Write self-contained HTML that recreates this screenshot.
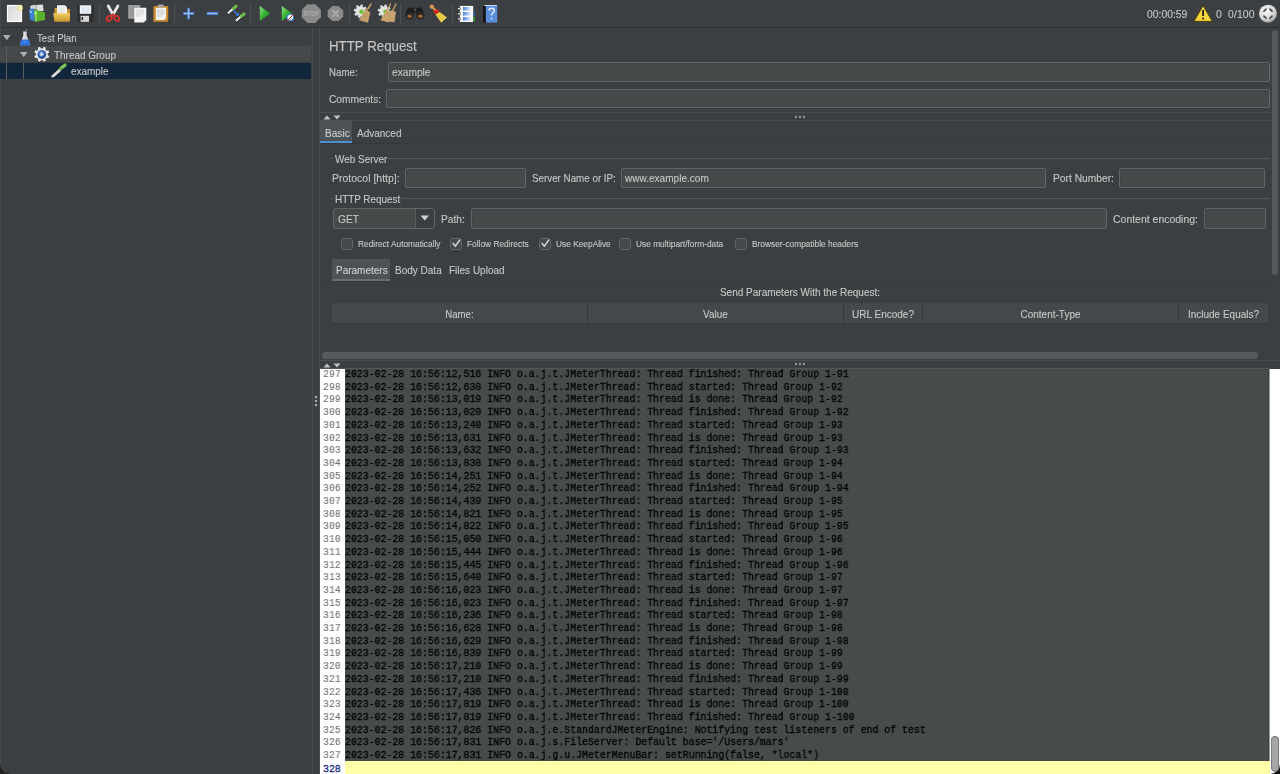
<!DOCTYPE html>
<html><head><meta charset="utf-8">
<style>
*{margin:0;padding:0;box-sizing:border-box}
html,body{width:1280px;height:774px;overflow:hidden;background:#3c3f41;font-family:"Liberation Sans",sans-serif;color:#c8c8c8}
.t{will-change:transform;-webkit-text-stroke:0.1px currentColor}
.a{position:absolute}
.t{position:absolute;white-space:nowrap}
.log{position:absolute;left:344px;top:369px;width:926px;height:405px;background:#474b4c;overflow:hidden}
.log pre, .gut pre{position:absolute;font-family:"Liberation Mono",monospace;font-size:11.5px;line-height:12.71px;transform-origin:0 0;transform:scale(0.8587,1);will-change:transform;-webkit-text-stroke:0.3px currentColor}
.log pre{left:1px;top:-1.0px;color:#000}
.gut{position:absolute;left:320px;top:369px;width:25px;height:405px;background:#fff;overflow:hidden}
.gut pre{left:2.5px;top:-1.0px;color:#727272;-webkit-text-stroke:0.12px currentColor}
</style></head><body>
<div class="a" style="left:0px;top:27px;width:1280px;height:1px;background:#2f3133;"></div>
<div class="a" style="left:99px;top:4px;width:1px;height:20px;background:#4f5254;"></div>
<div class="a" style="left:174px;top:4px;width:1px;height:20px;background:#4f5254;"></div>
<div class="a" style="left:250px;top:4px;width:1px;height:20px;background:#4f5254;"></div>
<div class="a" style="left:349px;top:4px;width:1px;height:20px;background:#4f5254;"></div>
<div class="a" style="left:400px;top:4px;width:1px;height:20px;background:#4f5254;"></div>
<div class="a" style="left:452px;top:4px;width:1px;height:20px;background:#4f5254;"></div>
<div class="t" style="left:1147px;top:9.83px;font-size:10.36px;line-height:10.36px;transform-origin:0 8.77px;transform:scaleY(1.1);">00:00:59</div>
<div class="t" style="left:1215.6px;top:9.80px;font-size:10.4px;line-height:10.4px;transform-origin:0 8.80px;transform:scaleY(1.1);">0</div>
<div class="t" style="left:1227.5px;top:9.80px;font-size:10.4px;line-height:10.4px;transform-origin:0 8.80px;transform:scaleY(1.1);letter-spacing:0.12px;">0/100</div>
<div class="a" style="left:0px;top:0px;width:1px;height:774px;background:#46494b;"></div>
<div class="a" style="left:0px;top:46px;width:311px;height:16px;background:#46494b;"></div>
<div class="a" style="left:0px;top:63px;width:311px;height:16px;background:#12263b;"></div>
<div class="a" style="left:6px;top:46px;width:1px;height:33px;background:#5a5d5f;"></div>
<div class="a" style="left:23px;top:63px;width:1px;height:16px;background:#5a5d5f;"></div>
<div class="t" style="left:36.5px;top:34.07px;font-size:9.6px;line-height:9.6px;transform-origin:0 8.13px;transform:scaleY(1.1);">Test Plan</div>
<div class="t" style="left:53.5px;top:50.67px;font-size:9.96px;line-height:9.96px;transform-origin:0 8.43px;transform:scaleY(1.1);">Thread Group</div>
<div class="t" style="left:70.5px;top:67.10px;font-size:9.92px;line-height:9.92px;transform-origin:0 8.40px;transform:scaleY(1.1);">example</div>
<svg class="a" style="left:3px;top:35px" width="8" height="6" viewBox="0 0 8 6"><path d="M0 0H7.5L3.75 5.2Z" fill="#aeaeae"/></svg>
<svg class="a" style="left:20px;top:52px" width="8" height="6" viewBox="0 0 8 6"><path d="M0 0H7.5L3.75 5.2Z" fill="#aeaeae"/></svg>
<div class="a" style="left:312px;top:28px;width:1px;height:746px;background:#4a4d4f;"></div>
<div class="a" style="left:319px;top:28px;width:1px;height:746px;background:#4a4d4f;"></div>
<svg class="a" style="left:314px;top:395.0px" width="4" height="4" viewBox="0 0 4 4"><circle cx="2" cy="2" r="1.3" fill="#d8d8d8" stroke="#2a2a2a" stroke-width=".4"/></svg>
<svg class="a" style="left:314px;top:399.2px" width="4" height="4" viewBox="0 0 4 4"><circle cx="2" cy="2" r="1.3" fill="#d8d8d8" stroke="#2a2a2a" stroke-width=".4"/></svg>
<svg class="a" style="left:314px;top:403.4px" width="4" height="4" viewBox="0 0 4 4"><circle cx="2" cy="2" r="1.3" fill="#d8d8d8" stroke="#2a2a2a" stroke-width=".4"/></svg>
<div class="t" style="left:328.5px;top:40.14px;font-size:13.3px;line-height:13.3px;transform-origin:0 11.26px;transform:scaleY(1.1);">HTTP Request</div>
<div class="t" style="left:328.5px;top:67.95px;font-size:9.75px;line-height:9.75px;transform-origin:0 8.25px;transform:scaleY(1.1);">Name:</div>
<div class="a" style="left:388px;top:62px;width:882px;height:20px;background:#45494a;border:1px solid #626567;border-radius:2px;box-shadow:inset 1px 1px 0 #3f4345;"></div>
<div class="t" style="left:392px;top:67.57px;font-size:10.2px;line-height:10.2px;transform-origin:0 8.63px;transform:scaleY(1.1);">example</div>
<div class="t" style="left:328.5px;top:94.67px;font-size:10.2px;line-height:10.2px;transform-origin:0 8.63px;transform:scaleY(1.1);">Comments:</div>
<div class="a" style="left:386px;top:89px;width:884px;height:19px;background:#45494a;border:1px solid #626567;border-radius:2px;box-shadow:inset 1px 1px 0 #3f4345;"></div>
<div class="a" style="left:320px;top:112px;width:950px;height:1px;background:#4b4e50;"></div>
<div class="a" style="left:320px;top:120px;width:950px;height:1px;background:#4b4e50;"></div>
<svg class="a" style="left:323px;top:115px" width="8" height="5" viewBox="0 0 8 5"><path d="M0.5 4.5H7.5L4 0.5Z" fill="#c0c0c0"/></svg>
<svg class="a" style="left:333px;top:115px" width="8" height="5" viewBox="0 0 8 5"><path d="M0.5 0.5H7.5L4 4.5Z" fill="#c0c0c0"/></svg>
<svg class="a" style="left:794.0px;top:115px" width="4" height="4" viewBox="0 0 4 4"><circle cx="2" cy="2" r="1.2" fill="#dcdcdc" stroke="#222" stroke-width=".5"/></svg>
<svg class="a" style="left:797.9px;top:115px" width="4" height="4" viewBox="0 0 4 4"><circle cx="2" cy="2" r="1.2" fill="#dcdcdc" stroke="#222" stroke-width=".5"/></svg>
<svg class="a" style="left:801.8px;top:115px" width="4" height="4" viewBox="0 0 4 4"><circle cx="2" cy="2" r="1.2" fill="#dcdcdc" stroke="#222" stroke-width=".5"/></svg>
<div class="a" style="left:320px;top:121px;width:32px;height:20px;background:#4d5254;"></div>
<div class="a" style="left:320px;top:141px;width:32px;height:2.6999999999999886px;background:#4f8ed6;"></div>
<div class="a" style="left:320px;top:143px;width:950px;height:1px;background:#37393b;"></div>
<div class="t" style="left:324.5px;top:128.55px;font-size:10.1px;line-height:10.1px;transform-origin:0 8.55px;transform:scaleY(1.1);color:#d0d0d0;">Basic</div>
<div class="t" style="left:356.5px;top:128.63px;font-size:10.0px;line-height:10.0px;transform-origin:0 8.46px;transform:scaleY(1.1);">Advanced</div>
<div class="a" style="left:330px;top:158px;width:3px;height:1px;background:#55585a;"></div>
<div class="a" style="left:387px;top:158px;width:883px;height:1px;background:#55585a;"></div>
<div class="t" style="left:334.5px;top:154.58px;font-size:9.95px;line-height:9.95px;transform-origin:0 8.42px;transform:scaleY(1.1);">Web Server</div>
<div class="t" style="left:332px;top:173.21px;font-size:10.5px;line-height:10.5px;transform-origin:0 8.89px;transform:scaleY(1.1);">Protocol [http]:</div>
<div class="a" style="left:405px;top:168px;width:121px;height:20px;background:#45494a;border:1px solid #626567;border-radius:2px;box-shadow:inset 1px 1px 0 #3f4345;"></div>
<div class="t" style="left:531.75px;top:174.30px;font-size:9.8px;line-height:9.8px;transform-origin:0 8.30px;transform:scaleY(1.1);">Server Name or IP:</div>
<div class="a" style="left:621px;top:168px;width:425px;height:20px;background:#45494a;border:1px solid #626567;border-radius:2px;box-shadow:inset 1px 1px 0 #3f4345;"></div>
<div class="t" style="left:625px;top:174.09px;font-size:10.05px;line-height:10.05px;transform-origin:0 8.51px;transform:scaleY(1.1);">www.example.com</div>
<div class="t" style="left:1052.5px;top:173.91px;font-size:10.26px;line-height:10.26px;transform-origin:0 8.69px;transform:scaleY(1.1);">Port Number:</div>
<div class="a" style="left:1119px;top:168px;width:146px;height:20px;background:#45494a;border:1px solid #626567;border-radius:2px;box-shadow:inset 1px 1px 0 #3f4345;"></div>
<div class="a" style="left:330px;top:198px;width:3px;height:1px;background:#55585a;"></div>
<div class="a" style="left:402px;top:198px;width:868px;height:1px;background:#55585a;"></div>
<div class="t" style="left:334.5px;top:195.22px;font-size:9.9px;line-height:9.9px;transform-origin:0 8.38px;transform:scaleY(1.1);">HTTP Request</div>
<div class="a" style="left:333px;top:208px;width:102px;height:21px;background:#45494a;border:1px solid #646464;border-radius:3px;"></div>
<div class="a" style="left:415px;top:209px;width:19px;height:19px;background:#3c3f41;border-left:1px solid #5a5d5f;border-radius:0 2px 2px 0;"></div>
<svg class="a" style="left:420px;top:215px" width="10" height="6" viewBox="0 0 10 6"><path d="M0.5 0.5H9L4.75 5.5Z" fill="#d0d0d0"/></svg>
<div class="t" style="left:338px;top:214.97px;font-size:10.2px;line-height:10.2px;transform-origin:0 8.63px;transform:scaleY(1.1);">GET</div>
<div class="t" style="left:441px;top:214.97px;font-size:10.2px;line-height:10.2px;transform-origin:0 8.63px;transform:scaleY(1.1);">Path:</div>
<div class="a" style="left:471px;top:208px;width:636px;height:21px;background:#45494a;border:1px solid #626567;border-radius:2px;box-shadow:inset 1px 1px 0 #3f4345;"></div>
<div class="t" style="left:1113px;top:214.74px;font-size:10.47px;line-height:10.47px;transform-origin:0 8.86px;transform:scaleY(1.1);">Content encoding:</div>
<div class="a" style="left:1204px;top:208px;width:62px;height:21px;background:#45494a;border:1px solid #626567;border-radius:2px;box-shadow:inset 1px 1px 0 #3f4345;"></div>
<div class="a" style="left:341px;top:237.5px;width:12px;height:12.5px;background:#44484a;border:1.2px solid #636668;border-radius:2.5px;"></div>
<div class="t" style="left:358px;top:240.13px;font-size:8.35px;line-height:8.35px;transform-origin:0 7.07px;transform:scaleY(1.1);">Redirect Automatically</div>
<div class="a" style="left:450px;top:237.5px;width:12px;height:12.5px;background:#44484a;border:1.2px solid #636668;border-radius:2.5px;"></div>
<svg class="a" style="left:451px;top:238px" width="11" height="11" viewBox="0 0 11 11"><path d="M2.2 5.4L4.3 8.2L8.6 2.2" fill="none" stroke="#cfcfcf" stroke-width="1.6" stroke-linecap="round"/></svg>
<div class="t" style="left:467px;top:240.13px;font-size:8.35px;line-height:8.35px;transform-origin:0 7.07px;transform:scaleY(1.1);">Follow Redirects</div>
<div class="a" style="left:539px;top:237.5px;width:12px;height:12.5px;background:#44484a;border:1.2px solid #636668;border-radius:2.5px;"></div>
<svg class="a" style="left:540px;top:238px" width="11" height="11" viewBox="0 0 11 11"><path d="M2.2 5.4L4.3 8.2L8.6 2.2" fill="none" stroke="#cfcfcf" stroke-width="1.6" stroke-linecap="round"/></svg>
<div class="t" style="left:556px;top:240.13px;font-size:8.35px;line-height:8.35px;transform-origin:0 7.07px;transform:scaleY(1.1);">Use KeepAlive</div>
<div class="a" style="left:619px;top:237.5px;width:12px;height:12.5px;background:#44484a;border:1.2px solid #636668;border-radius:2.5px;"></div>
<div class="t" style="left:636px;top:240.13px;font-size:8.35px;line-height:8.35px;transform-origin:0 7.07px;transform:scaleY(1.1);">Use multipart/form-data</div>
<div class="a" style="left:735px;top:237.5px;width:12px;height:12.5px;background:#44484a;border:1.2px solid #636668;border-radius:2.5px;"></div>
<div class="t" style="left:751.5px;top:240.13px;font-size:8.35px;line-height:8.35px;transform-origin:0 7.07px;transform:scaleY(1.1);">Browser-compatible headers</div>
<div class="a" style="left:332px;top:259px;width:58px;height:20px;background:#4d5254;"></div>
<div class="a" style="left:332px;top:279px;width:58px;height:3px;background:#6a6d6f;"></div>
<div class="a" style="left:320px;top:281px;width:950px;height:1px;background:#37393b;"></div>
<div class="t" style="left:336px;top:266.14px;font-size:10.0px;line-height:10.0px;transform-origin:0 8.46px;transform:scaleY(1.1);color:#d0d0d0;">Parameters</div>
<div class="t" style="left:394.5px;top:266.14px;font-size:10.0px;line-height:10.0px;transform-origin:0 8.46px;transform:scaleY(1.1);">Body Data</div>
<div class="t" style="left:449px;top:266.14px;font-size:10.0px;line-height:10.0px;transform-origin:0 8.46px;transform:scaleY(1.1);">Files Upload</div>
<div class="t" style="left:600px;top:288.14px;font-size:10.0px;line-height:10.0px;transform-origin:0 8.46px;transform:scaleY(1.1);width:400px;text-align:center;">Send Parameters With the Request:</div>
<div class="a" style="left:332px;top:303px;width:936px;height:21px;background:#45484a;"></div>
<div class="a" style="left:332px;top:323px;width:936px;height:1px;background:#37393b;"></div>
<div class="a" style="left:587px;top:303px;width:1px;height:20px;background:#38393b;"></div>
<div class="a" style="left:843px;top:303px;width:1px;height:20px;background:#38393b;"></div>
<div class="a" style="left:922px;top:303px;width:1px;height:20px;background:#38393b;"></div>
<div class="a" style="left:1178px;top:303px;width:1px;height:20px;background:#38393b;"></div>
<div class="t" style="left:332px;top:310.47px;font-size:9.6px;line-height:9.6px;transform-origin:0 8.13px;transform:scaleY(1.1);width:255px;text-align:center;">Name:</div>
<div class="t" style="left:588px;top:310.14px;font-size:10.0px;line-height:10.0px;transform-origin:0 8.46px;transform:scaleY(1.1);width:255px;text-align:center;">Value</div>
<div class="t" style="left:844px;top:310.14px;font-size:10.0px;line-height:10.0px;transform-origin:0 8.46px;transform:scaleY(1.1);width:78px;text-align:center;">URL Encode?</div>
<div class="t" style="left:923px;top:310.14px;font-size:10.0px;line-height:10.0px;transform-origin:0 8.46px;transform:scaleY(1.1);width:255px;text-align:center;">Content-Type</div>
<div class="t" style="left:1179px;top:310.14px;font-size:10.0px;line-height:10.0px;transform-origin:0 8.46px;transform:scaleY(1.1);width:89px;text-align:center;">Include Equals?</div>
<div class="a" style="left:1272px;top:30px;width:6px;height:245px;background:#56595b;border-radius:3px;"></div>
<div class="a" style="left:322px;top:352px;width:936px;height:6.5px;background:#56595b;border-radius:3px;"></div>
<div class="a" style="left:320px;top:360px;width:960px;height:1px;background:#4b4e50;"></div>
<div class="a" style="left:320px;top:361px;width:960px;height:7px;background:#3c3f41;"></div>
<svg class="a" style="left:323px;top:363px" width="8" height="5" viewBox="0 0 8 5"><path d="M0.5 4.5H7.5L4 0.5Z" fill="#c0c0c0"/></svg>
<svg class="a" style="left:333px;top:363px" width="8" height="5" viewBox="0 0 8 5"><path d="M0.5 0.5H7.5L4 4.5Z" fill="#c0c0c0"/></svg>
<svg class="a" style="left:794.0px;top:362px" width="4" height="4" viewBox="0 0 4 4"><circle cx="2" cy="2" r="1.2" fill="#dcdcdc" stroke="#222" stroke-width=".5"/></svg>
<svg class="a" style="left:797.9px;top:362px" width="4" height="4" viewBox="0 0 4 4"><circle cx="2" cy="2" r="1.2" fill="#dcdcdc" stroke="#222" stroke-width=".5"/></svg>
<svg class="a" style="left:801.8px;top:362px" width="4" height="4" viewBox="0 0 4 4"><circle cx="2" cy="2" r="1.2" fill="#dcdcdc" stroke="#222" stroke-width=".5"/></svg>
<div class="a" style="left:320px;top:368px;width:950px;height:1px;background:#525557;"></div>
<div class="a" style="left:1270px;top:369px;width:10px;height:405px;background:#ffffff;"></div>
<div class="a" style="left:1271px;top:736px;width:8px;height:36px;background:#a6a6a6;border:1px solid #7a7a7a;border-radius:4px;"></div>
<div class="a" style="left:0;top:764px;width:10px;height:10px;background:#222"><div class="a" style="left:0;top:0;width:10px;height:10px;background:#3c3f41;border-bottom-left-radius:10px"></div></div>
<div class="a" style="left:1270px;top:764px;width:10px;height:10px;background:#111"><div class="a" style="left:0;top:0;width:10px;height:10px;background:#fff;border-bottom-right-radius:10px"></div></div>
<div class="a" style="left:1271px;top:736px;width:8px;height:36px;background:#a6a6a6;border:1px solid #7a7a7a;border-radius:4px;"></div>
<svg class="a" width="0" height="0" style="left:0;top:0"><defs>
<linearGradient id="gG" x1="0" y1="0" x2="1" y2="1"><stop offset="0" stop-color="#8ee88a"/><stop offset=".5" stop-color="#34b030"/><stop offset="1" stop-color="#1a7a1a"/></linearGradient>
<linearGradient id="gFold" x1="0" y1="0" x2="0" y2="1"><stop offset="0" stop-color="#f2cc60"/><stop offset="1" stop-color="#c8962c"/></linearGradient>
<linearGradient id="gPage" x1="0" y1="0" x2="1" y2="1"><stop offset="0" stop-color="#d8d8d8"/><stop offset="1" stop-color="#f0f0f0"/></linearGradient>
<linearGradient id="gBlue" x1="0" y1="0" x2="1" y2="0"><stop offset="0" stop-color="#4a84e0"/><stop offset="1" stop-color="#f4f8ff"/></linearGradient>
<radialGradient id="gSph" cx=".45" cy=".4" r=".6"><stop offset="0" stop-color="#9ab8f0"/><stop offset=".6" stop-color="#3060b8"/><stop offset="1" stop-color="#1a3a80"/></radialGradient>
<radialGradient id="rg" cx=".4" cy=".35" r=".7"><stop offset="0" stop-color="#ffffff"/><stop offset=".7" stop-color="#d0d0d0"/><stop offset="1" stop-color="#8a8a8a"/></radialGradient>
</defs></svg>
<svg class="a" style="left:5px;top:3px;overflow:visible" width="20" height="22" viewBox="5 3 20 22">
<rect x="7.5" y="5.5" width="14" height="16" fill="url(#gPage)" stroke="#ffffff" stroke-width="1.2"/>
<path d="M8.3 9.5h1M8.3 13.5h1M8.3 17.5h1" stroke="#b0b0b0" stroke-width=".6"/>
<circle cx="20.3" cy="7.9" r="2.1" fill="#fffbe0" stroke="#ecd850" stroke-width="1.1" stroke-opacity=".8"/>
</svg>
<svg class="a" style="left:27px;top:3px;overflow:visible" width="20" height="21" viewBox="27 3 20 21">
<path d="M30 6 L35 4.5 L37 9 L31 10Z" fill="#d4d4d4"/>
<path d="M36 5 L43 4.5 L43.5 11 L37 11Z" fill="#dedede"/>
<path d="M29 9.2 L34.2 8.6 L34.6 21 L30.2 20.2Z" fill="#3b80d6"/>
<path d="M30 11 L31.5 10.8 L31.8 13 L30.3 13Z" fill="#cfe4ff" fill-opacity=".8"/>
<path d="M34 10.5 L37 10.3 L45 12.5 L45 20 L35 21.8Z" fill="#58b02e"/>
<path d="M34 10.5 L37 10.3 L37 21.2 L35 21.8Z" fill="#7fd04e"/>
<rect x="35" y="12.5" width="1.5" height="1.6" fill="#e6ffd0"/>
</svg>
<svg class="a" style="left:52px;top:4px;overflow:visible" width="20" height="20" viewBox="52 4 20 20">
<path d="M54.5 8 H58 L59 9 H70 V21 H54.5Z" fill="#c8962c"/>
<path d="M57 5.2 H65 L67 7.2 V14 H57Z" fill="#f6f6f6"/>
<path d="M58.5 8h6M58.5 10h6M58.5 12h6" stroke="#c8c8c8" stroke-width=".6"/>
<path d="M53.2 13.3 H70 L69.6 21.8 H54.5Z" fill="url(#gFold)"/>
</svg>
<svg class="a" style="left:76px;top:4px;overflow:visible" width="19" height="19" viewBox="76 4 19 19">
<path d="M77.3 5 H93.8 V21.8 H78.5 L77.3 20.6Z" fill="#2e2e2e"/>
<rect x="79.8" y="5.3" width="11.4" height="8.5" fill="#f4f7fb"/>
<path d="M81 8h9M81 10h9M81 12h9" stroke="#b4c4dc" stroke-width=".6"/>
<rect x="80.6" y="15.8" width="8.4" height="6" fill="#d8d8d8"/>
<rect x="81.6" y="17" width="1.5" height="3" fill="#222"/>
</svg>
<svg class="a" style="left:104px;top:3px;overflow:visible" width="18" height="21" viewBox="104 3 18 21">
<path d="M108.3 6 L112.6 13.9 M117.9 6 L113.4 13.9" stroke="#e6e6e6" stroke-width="2.8" stroke-linecap="round"/>
<ellipse cx="109.2" cy="18.4" rx="2.9" ry="2.1" transform="rotate(-50 109.2 18.4)" fill="none" stroke="#dc3228" stroke-width="1.8"/>
<ellipse cx="116.8" cy="18.4" rx="2.9" ry="2.1" transform="rotate(50 116.8 18.4)" fill="none" stroke="#dc3228" stroke-width="1.8"/>
<path d="M111.3 15.6 L113 14 L114.7 15.6" stroke="#dc3228" stroke-width="1.6" fill="none"/>
</svg>
<svg class="a" style="left:127px;top:4px;overflow:visible" width="21" height="20" viewBox="127 4 21 20">
<rect x="128.2" y="5" width="12" height="13.7" fill="#a0a0a0"/>
<path d="M129.5 7h9M129.5 9h9M129.5 11h9M129.5 13h9M129.5 15h9" stroke="#8c8c8c" stroke-width=".6"/>
<path d="M134.3 7.7 H146.3 V20 L143.8 22.5 H134.3Z" fill="#f6f6f6"/>
<path d="M136 10h8M136 12h8M136 14h8M136 16h6" stroke="#bdbdbd" stroke-width=".7"/>
<path d="M143.8 22.5 V20 H146.3Z" fill="#c8c8c8"/>
</svg>
<svg class="a" style="left:152px;top:3px;overflow:visible" width="18" height="20" viewBox="152 3 18 20">
<rect x="153.4" y="6.1" width="14.8" height="15.6" rx="1" fill="#c88b2e"/>
<path d="M155.8 7.7 H166 V18 L164 20 H155.8Z" fill="#f4f4f4"/>
<path d="M157 10h7.5M157 12h7.5M157 14h7.5M157 16h5" stroke="#b4b4b4" stroke-width=".7"/>
<rect x="157.8" y="4.5" width="6" height="3" rx="1.2" fill="#a8a8a0"/>
</svg>
<svg class="a" style="left:181px;top:6px;overflow:visible" width="15" height="15" viewBox="181 6 15 15">
<path d="M188.6 7.8 V19.2 M183.2 13.5 H194.2" stroke="#4a80d0" stroke-width="2.8"/>
<path d="M188.6 8.6 V18.4 M184 13.5 H193.4" stroke="#c4dcf8" stroke-width=".7"/>
</svg>
<svg class="a" style="left:205px;top:10px;overflow:visible" width="15" height="7" viewBox="205 10 15 7">
<path d="M206.8 13.45 H218.2" stroke="#4a80d0" stroke-width="3.2"/>
<path d="M207.6 13.45 H217.4" stroke="#c4dcf8" stroke-width=".7"/>
</svg>
<svg class="a" style="left:225px;top:3px;overflow:visible" width="23" height="21" viewBox="225 3 23 21">
<path d="M228.5 12.8 L233.2 8.6" stroke="#1c1c1c" stroke-width="3.4" stroke-linecap="round"/>
<path d="M228.5 12.8 L233.2 8.6" stroke="#ececec" stroke-width="2.2" stroke-linecap="round"/>
<path d="M233.6 8.4 L236 6.3" stroke="#6cb84a" stroke-width="3.2" stroke-linecap="round"/>
<path d="M236.4 20.4 L241.1 16.4" stroke="#1c1c1c" stroke-width="3.4" stroke-linecap="round"/>
<path d="M236.4 20.4 L241.1 16.4" stroke="#ececec" stroke-width="2.2" stroke-linecap="round"/>
<path d="M241.5 16.1 L244 14" stroke="#6cb84a" stroke-width="3.2" stroke-linecap="round"/>
<path d="M233.5 10.8 L237.6 14.6" stroke="#3a84f0" stroke-width="1.3"/>
<path d="M235.6 15.6 L239.2 15.8 L238.6 12.4Z" fill="#3a84f0"/>
</svg>
<svg class="a" style="left:258px;top:5px;overflow:visible" width="14" height="17" viewBox="258 5 14 17">
<path d="M259.8 6 L270.2 13.5 L259.8 21Z" fill="url(#gG)"/>
</svg>
<svg class="a" style="left:280px;top:5px;overflow:visible" width="16" height="18" viewBox="280 5 16 18">
<path d="M281.8 6 L292.2 13.5 L281.8 21Z" fill="url(#gG)"/>
<circle cx="290.3" cy="17.5" r="3.3" fill="#f0f4ff" stroke="#3a78d0" stroke-width="1.1"/>
<path d="M286.5 21.5 L294 14" stroke="#d83020" stroke-width="1"/>
</svg>
<svg class="a" style="left:301px;top:3px;overflow:visible" width="21" height="21" viewBox="301 3 21 21">
<path d="M307.4 4.2 H315.3 L320.9 9.8 V17.3 L315.3 22.9 H307.4 L301.8 17.3 V9.8Z" fill="#8a8a8a"/>
<text x="311.35" y="16.2" font-family="Liberation Sans" font-weight="bold" font-size="7.2" fill="#a6a6a6" stroke="#a6a6a6" stroke-width=".35" text-anchor="middle" textLength="15" lengthAdjust="spacingAndGlyphs">STOP</text>
</svg>
<svg class="a" style="left:327px;top:5px;overflow:visible" width="17" height="17" viewBox="327 5 17 17">
<path d="M332.2 6 H338.7 L343.2 10.5 V16.5 L338.7 21 H332.2 L327.7 16.5 V10.5Z" fill="#8a8a8a"/>
<path d="M332.3 10.3 L338.6 16.7 M338.6 10.3 L332.3 16.7" stroke="#a8a8a8" stroke-width="2.2"/>
</svg>
<svg class="a" style="left:352px;top:3px;overflow:visible" width="23" height="21" viewBox="352 3 23 21">
<path d="M365.49 10.96 L367.30 11.39 L366.83 13.68 L365.01 13.37 L364.20 14.56 L365.18 16.14 L363.23 17.43 L362.15 15.92 L360.74 16.19 L360.31 18.00 L358.02 17.53 L358.33 15.71 L357.14 14.90 L355.56 15.88 L354.27 13.93 L355.78 12.85 L355.51 11.44 L353.70 11.01 L354.17 8.72 L355.99 9.03 L356.80 7.84 L355.82 6.26 L357.77 4.97 L358.85 6.48 L360.26 6.21 L360.69 4.40 L362.98 4.87 L362.67 6.69 L363.86 7.50 L365.44 6.52 L366.73 8.47 L365.22 9.55Z" fill="#e2e2e2"/>
<circle cx="361.5" cy="11.8" r="2.3" fill="#6cc83a"/>
<path d="M371 4 L366.5 11" stroke="#c09a62" stroke-width="1.6" stroke-linecap="round"/>
<path d="M365 10 L370.2 12 L368 22.7 L359 20.2Z" fill="#c8a26c"/>
<path d="M366 13 L362 20 M368 13 L365 21" stroke="#a88450" stroke-width=".5"/>
</svg>
<svg class="a" style="left:376px;top:3px;overflow:visible" width="22" height="21" viewBox="376 3 22 21">
<path d="M389.49 10.96 L391.30 11.39 L390.83 13.68 L389.01 13.37 L388.20 14.56 L389.18 16.14 L387.23 17.43 L386.15 15.92 L384.74 16.19 L384.31 18.00 L382.02 17.53 L382.33 15.71 L381.14 14.90 L379.56 15.88 L378.27 13.93 L379.78 12.85 L379.51 11.44 L377.70 11.01 L378.17 8.72 L379.99 9.03 L380.80 7.84 L379.82 6.26 L381.77 4.97 L382.85 6.48 L384.26 6.21 L384.69 4.40 L386.98 4.87 L386.67 6.69 L387.86 7.50 L389.44 6.52 L390.73 8.47 L389.22 9.55Z" fill="#e2e2e2"/>
<circle cx="385.5" cy="11.8" r="2.3" fill="#6cc83a"/>
<path d="M390.5 4 L387 11 M396 4 L392.5 11" stroke="#c09a62" stroke-width="1.5" stroke-linecap="round"/>
<path d="M386 10 L391 12 L389 22.5 L380.5 20.2Z" fill="#c8a26c"/>
<path d="M391.5 10 L396 12 L394.5 22.5 L387 21Z" fill="#c8a26c"/>
</svg>
<svg class="a" style="left:403px;top:5px;overflow:visible" width="23" height="16" viewBox="403 5 23 16">
<path d="M407.5 9 L410 7.2 L413.5 8 L414.5 10 L415.5 10 L416.5 8 L420 7.2 L422.5 9 L424.2 15 L419 17 L415.2 12.5 L414.8 12.5 L411 17 L405 15Z" fill="#1e1e1e"/>
<circle cx="409.6" cy="15.6" r="4" fill="#262626"/>
<circle cx="420.4" cy="15.6" r="4" fill="#262626"/>
<ellipse cx="409.6" cy="16.3" rx="2.3" ry="1.7" fill="#a86428"/>
<ellipse cx="420.4" cy="16.3" rx="2.3" ry="1.7" fill="#a86428"/>
<circle cx="415" cy="10.3" r="1" fill="#5a5a5a"/>
</svg>
<svg class="a" style="left:428px;top:3px;overflow:visible" width="21" height="21" viewBox="428 3 21 21">
<circle cx="431.8" cy="6.6" r="2.2" fill="#d09850"/>
<path d="M432 6.8 L436 11" stroke="#d09850" stroke-width="2.2"/>
<path d="M433 11.3 L437.5 9 L439.8 12 L435.5 14.5Z" fill="#d62a1c"/>
<path d="M435.5 14.5 L439.8 12 L447 17.4 L441.2 22.8Z" fill="#e8d048"/>
<path d="M438 15 L443 20 M440 13.5 L445 18.5" stroke="#c8b038" stroke-width=".6"/>
</svg>
<svg class="a" style="left:456px;top:4px;overflow:visible" width="21" height="19" viewBox="456 4 21 19">
<rect x="459.8" y="5.9" width="13.4" height="16.1" fill="#fafafa"/>
<rect x="463" y="7" width="8.5" height="3.5" fill="url(#gBlue)"/>
<rect x="463" y="12" width="8.5" height="3.5" fill="url(#gBlue)"/>
<rect x="463" y="17" width="8.5" height="3.5" fill="url(#gBlue)"/>
<circle cx="459" cy="8.7" r="1.4" fill="#fff" stroke="#111" stroke-width=".7"/>
<circle cx="459" cy="13.8" r="1.4" fill="#fff" stroke="#111" stroke-width=".7"/>
<circle cx="459" cy="18.9" r="1.4" fill="#fff" stroke="#111" stroke-width=".7"/>
<rect x="473.2" y="12" width="1.8" height="3.5" fill="#2a62d0"/>
<rect x="473.2" y="17" width="1.8" height="4" fill="#2a9a30"/>
</svg>
<svg class="a" style="left:481px;top:3px;overflow:visible" width="18" height="21" viewBox="481 3 18 21">
<rect x="483.1" y="5.1" width="3" height="17.5" fill="#121212"/>
<rect x="485.8" y="5.1" width="11.4" height="17.5" fill="#5a8ed8"/>
<rect x="484" y="5" width="13" height="0.9" fill="#e0e8f4"/>
<path d="M489 10.6 Q489 8.2 491.6 8.2 Q494.4 8.2 494.4 10.6 Q494.4 12.2 492.4 13.2 Q491.6 13.8 491.6 15.6" fill="none" stroke="#e8f0ff" stroke-width="1.4"/>
<circle cx="491.6" cy="18.6" r=".9" fill="#e8f0ff"/>
</svg>
<svg class="a" style="left:1192px;top:4px;overflow:visible" width="23" height="20" viewBox="1192 4 23 20">
<path d="M1203.1 5.6 L1212.3 21.4 H1193.9Z" fill="#f4d43c" stroke="#4a3c0c" stroke-width="1" stroke-linejoin="round"/>
<path d="M1203.1 10 V16" stroke="#1c1c1c" stroke-width="1.8"/>
<circle cx="1203.1" cy="18.4" r="1" fill="#1c1c1c"/>
</svg>
<svg class="a" style="left:1257px;top:3px;overflow:visible" width="22" height="22" viewBox="1257 3 22 22">
<circle cx="1268" cy="13.7" r="9" fill="url(#rg)"/>
<path d="M1264 11.2 L1266 9.2 M1270 9.2 L1272 11.2 M1272 16.2 L1270 18.2 M1266 18.2 L1264 16.2" stroke="#505050" stroke-width="1.8" stroke-linecap="round"/>
</svg>
<svg class="a" style="left:18px;top:28px;overflow:visible" width="15" height="19" viewBox="18 28 15 19">
<path d="M26 29.4 L27 29.4 L26.8 31.5 L26.2 31.5Z" fill="#bcbcbc"/>
<path d="M23.2 31.2 H27 V35.8 L30.2 43.2 Q30.8 45.6 28.6 45.6 H21.6 Q19.4 45.6 20 43.2 L23.2 35.8Z" fill="#d6d8dc" stroke="#222" stroke-width=".5"/>
<path d="M24 31.5 V36 L21.5 42" stroke="#f8f8f8" stroke-width=".9" fill="none"/>
<path d="M21.6 39.6 H28.6 L30.2 43.2 Q30.8 45.6 28.6 45.6 H21.6 Q19.4 45.6 20 43.2Z" fill="#2f74e0"/>
<rect x="23.5" y="41" width="2" height="1.5" fill="#7ab0ff" fill-opacity=".6"/>
</svg>
<svg class="a" style="left:33px;top:46px;overflow:visible" width="18" height="17" viewBox="33 46 18 17">
<path d="M47.72 55.30 L49.29 56.10 L48.37 58.32 L46.69 57.78 L45.28 59.19 L45.82 60.87 L43.60 61.79 L42.80 60.22 L40.80 60.22 L40.00 61.79 L37.78 60.87 L38.32 59.19 L36.91 57.78 L35.23 58.32 L34.31 56.10 L35.88 55.30 L35.88 53.30 L34.31 52.50 L35.23 50.28 L36.91 50.82 L38.32 49.41 L37.78 47.73 L40.00 46.81 L40.80 48.38 L42.80 48.38 L43.60 46.81 L45.82 47.73 L45.28 49.41 L46.69 50.82 L48.37 50.28 L49.29 52.50 L47.72 53.30Z" fill="#eaeaea"/>
<circle cx="41.8" cy="54.3" r="4.4" fill="url(#gSph)"/>
<path d="M40.6 52.3 L44 54.4 L40.6 56.5Z" fill="#e8eeff"/>
</svg>
<svg class="a" style="left:49px;top:62px;overflow:visible" width="19" height="18" viewBox="49 62 19 18">
<path d="M50.8 77.9 L51.4 75 L59 67.9 L61.8 70.9 L54.1 77.8Z" fill="#101010" fill-opacity=".55"/>
<path d="M51.2 77.4 L51.9 75.3 L59.25 68.5 L61.2 70.7 L53.9 77.3Z" fill="#dcdcdc"/>
<path d="M53.5 74.6 L57.5 70.9" stroke="#8a8a8a" stroke-width=".45" stroke-dasharray=".7 .9"/>
<path d="M60.6 68.6 L65 65.2" stroke="#66b046" stroke-width="3.6" stroke-linecap="round"/>
<path d="M61.8 67.2 L64.6 65.1" stroke="#a4e084" stroke-width="1.1" stroke-linecap="round"/>
</svg>
<div class="log"><pre>2023-02-28 16:56:12,516 INFO o.a.j.t.JMeterThread: Thread finished: Thread Group 1-91
2023-02-28 16:56:12,638 INFO o.a.j.t.JMeterThread: Thread started: Thread Group 1-92
2023-02-28 16:56:13,019 INFO o.a.j.t.JMeterThread: Thread is done: Thread Group 1-92
2023-02-28 16:56:13,020 INFO o.a.j.t.JMeterThread: Thread finished: Thread Group 1-92
2023-02-28 16:56:13,240 INFO o.a.j.t.JMeterThread: Thread started: Thread Group 1-93
2023-02-28 16:56:13,631 INFO o.a.j.t.JMeterThread: Thread is done: Thread Group 1-93
2023-02-28 16:56:13,632 INFO o.a.j.t.JMeterThread: Thread finished: Thread Group 1-93
2023-02-28 16:56:13,838 INFO o.a.j.t.JMeterThread: Thread started: Thread Group 1-94
2023-02-28 16:56:14,251 INFO o.a.j.t.JMeterThread: Thread is done: Thread Group 1-94
2023-02-28 16:56:14,252 INFO o.a.j.t.JMeterThread: Thread finished: Thread Group 1-94
2023-02-28 16:56:14,439 INFO o.a.j.t.JMeterThread: Thread started: Thread Group 1-95
2023-02-28 16:56:14,821 INFO o.a.j.t.JMeterThread: Thread is done: Thread Group 1-95
2023-02-28 16:56:14,822 INFO o.a.j.t.JMeterThread: Thread finished: Thread Group 1-95
2023-02-28 16:56:15,050 INFO o.a.j.t.JMeterThread: Thread started: Thread Group 1-96
2023-02-28 16:56:15,444 INFO o.a.j.t.JMeterThread: Thread is done: Thread Group 1-96
2023-02-28 16:56:15,445 INFO o.a.j.t.JMeterThread: Thread finished: Thread Group 1-96
2023-02-28 16:56:15,640 INFO o.a.j.t.JMeterThread: Thread started: Thread Group 1-97
2023-02-28 16:56:16,023 INFO o.a.j.t.JMeterThread: Thread is done: Thread Group 1-97
2023-02-28 16:56:16,023 INFO o.a.j.t.JMeterThread: Thread finished: Thread Group 1-97
2023-02-28 16:56:16,236 INFO o.a.j.t.JMeterThread: Thread started: Thread Group 1-98
2023-02-28 16:56:16,628 INFO o.a.j.t.JMeterThread: Thread is done: Thread Group 1-98
2023-02-28 16:56:16,629 INFO o.a.j.t.JMeterThread: Thread finished: Thread Group 1-98
2023-02-28 16:56:16,839 INFO o.a.j.t.JMeterThread: Thread started: Thread Group 1-99
2023-02-28 16:56:17,210 INFO o.a.j.t.JMeterThread: Thread is done: Thread Group 1-99
2023-02-28 16:56:17,210 INFO o.a.j.t.JMeterThread: Thread finished: Thread Group 1-99
2023-02-28 16:56:17,436 INFO o.a.j.t.JMeterThread: Thread started: Thread Group 1-100
2023-02-28 16:56:17,819 INFO o.a.j.t.JMeterThread: Thread is done: Thread Group 1-100
2023-02-28 16:56:17,819 INFO o.a.j.t.JMeterThread: Thread finished: Thread Group 1-100
2023-02-28 16:56:17,826 INFO o.a.j.e.StandardJMeterEngine: Notifying test listeners of end of test
2023-02-28 16:56:17,831 INFO o.a.j.s.FileServer: Default base=&#x27;/Users/mars&#x27;
2023-02-28 16:56:17,831 INFO o.a.j.g.u.JMeterMenuBar: setRunning(false, *local*)</pre><div class="a" style="left:924px;top:0;width:1px;height:406px;background:#3e4243"></div><div class="a" style="left:925px;top:0;width:1px;height:406px;background:#9a9c9c"></div><div class="a" style="left:0;top:392px;width:926px;height:13px;background:#ffffaa"></div></div>
<div class="gut"><pre>297
298
299
300
301
302
303
304
305
306
307
308
309
310
311
312
313
314
315
316
317
318
319
320
321
322
323
324
325
326
327</pre><div class="a" style="left:2.5px;top:393px;font-family:'Liberation Mono',monospace;font-size:11.5px;color:#1f2f8a;-webkit-text-stroke:0.35px currentColor;transform-origin:0 0;transform:scale(0.8587,1)">328</div></div>
</body></html>
